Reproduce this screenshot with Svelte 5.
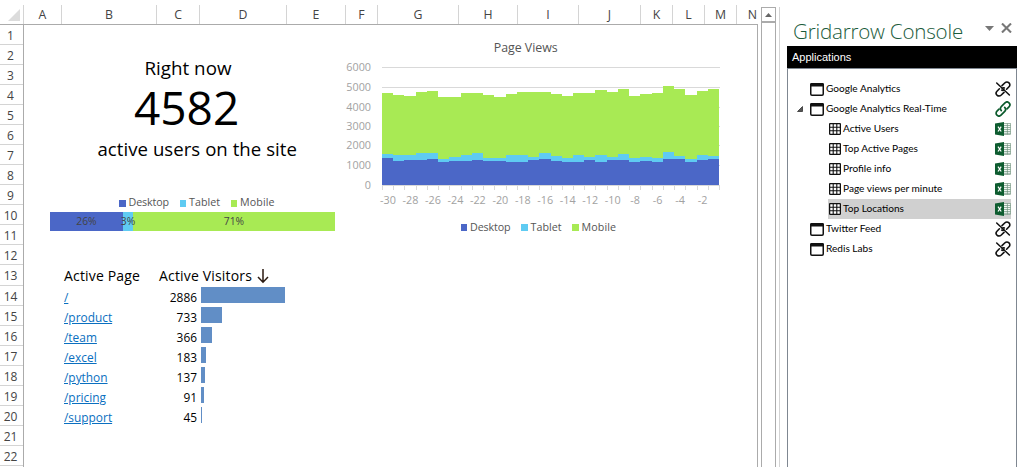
<script>
    const columns = [
        { name: 'A', width: 38 },
        { name: 'B', width: 95 },
        { name: 'C', width: 43 },
        { name: 'D', width: 87 },
        { name: 'E', width: 59 },
        { name: 'F', width: 32 },
        { name: 'G', width: 81 },
        { name: 'H', width: 59 },
        { name: 'I', width: 61 },
        { name: 'J', width: 62 },
        { name: 'K', width: 32 },
        { name: 'L', width: 32 },
        { name: 'M', width: 32 },
        { name: 'N', width: 32 }
    ];
    const rows = Array.from({ length: 22 }, (_, i) => i + 1);

    const pages = [
        { path: '/', visitors: 2886, bar: 84 },
        { path: '/product', visitors: 733, bar: 21 },
        { path: '/team', visitors: 366, bar: 11 },
        { path: '/excel', visitors: 183, bar: 5 },
        { path: '/python', visitors: 137, bar: 4 },
        { path: '/pricing', visitors: 91, bar: 3 },
        { path: '/support', visitors: 45, bar: 1 }
    ];

    // cumulative heights, one entry per minute
    const desktop = [27, 24, 25, 25, 26, 23, 24, 24, 25, 24, 24, 23, 23, 25, 26, 24, 23, 23, 25, 23, 25, 25, 23, 24, 23, 26, 26, 23, 25, 26];
    const tablet = [31, 30, 30, 32, 32, 26, 28, 30, 32, 27, 27, 30, 30, 28, 32, 29, 27, 30, 28, 30, 28, 31, 27, 28, 27, 33, 29, 26, 30, 29];
    const mobile = [92, 90, 89, 93, 94, 88, 88, 92, 92, 90, 88, 91, 93, 93, 93, 91, 89, 92, 92, 95, 93, 96, 89, 91, 92, 99, 96, 90, 94, 96];
    const series = [
        { name: 'mobile', data: mobile },
        { name: 'tablet', data: tablet },
        { name: 'desktop', data: desktop }
    ];

    const left = 382;
    const base = 185;
    const step = 337 / 30;
    const yTicks = [
        [6000, 67], [5000, 87], [4000, 107], [3000, 126], [2000, 145], [1000, 165], [0, 185]
    ];
    const xTicks = Array.from({ length: 15 }, (_, i) => -30 + i * 2);

    function area(data) {
        let d = `M${left} ${base}`;
        data.forEach((h, i) => {
            d += `V${base - h}H${Math.round(left + step * (i + 1))}`;
        });
        return d + `V${base}Z`;
    }

    const apps = [
        { name: 'Google Analytics', linked: false, tables: [] },
        {
            name: 'Google Analytics Real-Time',
            linked: true,
            tables: ['Active Users', 'Top Active Pages', 'Profile info', 'Page views per minute', 'Top Locations']
        },
        { name: 'Twitter Feed', linked: false, tables: [] },
        { name: 'Redis Labs', linked: false, tables: [] }
    ];
    let selected = $state('Top Locations');
</script>

{#snippet windowIcon()}
    <svg class="window" width="14" height="13" viewBox="0 0 14 13">
        <rect x="0.75" y="0.75" width="12.5" height="11.5" rx="1.2" fill="#fff" stroke="#111" stroke-width="1.5" />
        <path d="M0 3.4V1.5Q0 0 1.5 0H12.5Q14 0 14 1.5V3.4Z" fill="#111" />
    </svg>
{/snippet}

{#snippet gridIcon()}
    <svg class="table" width="12" height="12" viewBox="0 0 12 12">
        <rect x="0.6" y="0.6" width="10.8" height="10.8" rx="0.8" fill="#fff" stroke="#111" stroke-width="1.3" />
        <path d="M4.2 0V12M7.8 0V12M0 4.2H12M0 7.8H12" stroke="#111" stroke-width="1.1" />
    </svg>
{/snippet}

{#snippet linkIcon(linked)}
    <svg width="16" height="16" viewBox="0 0 16 16" fill="none" stroke={linked ? '#0b5a2c' : '#111'} stroke-width="1.7" stroke-linecap="round">
        {#if linked}
            <path d="M6.3 9.6C4.9 8.1 5.2 6.6 6.5 5.3L10 1.9C11.2 .7 12.9 .7 14 1.8C15.2 3 15.2 4.6 14 5.8L12 7.8" />
            <path d="M9.7 6.4C11.1 7.9 10.8 9.4 9.5 10.7L6 14.1C4.8 15.3 3.1 15.3 2 14.2C.8 13 .8 11.4 2 10.2L4 8.2" />
        {:else}
            <path d="M7 4.6L9.7 2C10.9 .9 12.8 .8 14 1.9C15.2 3.1 15.1 4.7 14 5.8L11.6 8.2M7.4 7.4C7.8 6.8 8.6 6.6 9.3 7" stroke-width="1.6" />
            <path d="M9 11.4L6.3 14C5.1 15.1 3.2 15.2 2 14.1C.8 12.9 .9 11.3 2 10.2L4.4 7.8M8.7 8.8C8.3 9.4 7.4 9.5 6.7 9.1" stroke-width="1.6" />
            <path d="M1.7 2L14.4 14" stroke-width="1.5" />
        {/if}
    </svg>
{/snippet}

{#snippet excelIcon()}
    <svg width="16" height="14" viewBox="0 0 16 14">
        <rect x="8" y="1.5" width="7.6" height="11" fill="#f4f8f5" stroke="#7c9c88" stroke-width="0.7" />
        <path d="M9 3.5H15.5M9 5.5H15.5M9 7.5H15.5M9 9.5H15.5M9 11.3H15.5M12.4 1.5V12.5" stroke="#6f9480" stroke-width="0.7" />
        <path d="M0 1.5L9 0V14L0 12.5Z" fill="#0d5c2f" />
        <path d="M3 4.7L6.2 9.5M6.2 4.7L3 9.5" stroke="#fff" stroke-width="1.2" />
    </svg>
{/snippet}

<div class="app">
    <main class="sheet">
        <div class="head">
            <div class="corner">
                <svg width="12" height="12" viewBox="0 0 12 12"><path d="M12 0V12H0Z" fill="#dcdcdc" /></svg>
            </div>
            {#each columns as col}
                <div class="col" style="width: {col.width}px">{col.name}</div>
            {/each}
        </div>

        <div class="body">
            <div class="rows">
                {#each rows as n}
                    <div class="row" class:tall={n === 13}>{n}</div>
                {/each}
            </div>

            <div class="cells">
                <section class="summary">
                    <div class="now">Right now</div>
                    <div class="count">4582</div>
                    <div class="users">active users on the site</div>

                    <svg class="share" width="316" height="40" viewBox="24 194 316 40">
                        <g class="desktop"><rect x="119" y="200" width="7" height="7" /><rect x="50" y="212" width="73" height="19" /></g>
                        <g class="tablet"><rect x="180" y="200" width="6" height="7" /><rect x="123" y="212" width="10" height="19" /></g>
                        <g class="mobile"><rect x="231" y="200" width="6" height="7" /><rect x="133" y="212" width="202" height="19" /></g>
                        <g class="legend">
                            <text x="128.5" y="206" textLength="40.5">Desktop</text>
                            <text x="189" y="206" textLength="31">Tablet</text>
                            <text x="240" y="206" textLength="34.5">Mobile</text>
                        </g>
                        <g class="percent">
                            <text x="86.5" y="225">26%</text>
                            <text x="128" y="225">3%</text>
                            <text x="234" y="225">71%</text>
                        </g>
                    </svg>

                    <div class="pages">
                        <div class="line title">
                            <span class="page">Active Page</span>
                            <span>Active Visitors</span>
                            <svg width="12" height="15" viewBox="0 0 12 15"><path d="M6 0V13M1 8L6 13.2L11 8" fill="none" stroke="#2b1a10" stroke-width="1.5" /></svg>
                        </div>
                        {#each pages as page}
                            <div class="line">
                                <span class="page"><a href={page.path}>{page.path}</a></span>
                                <span class="visitors">{page.visitors}</span>
                                <span class="bar" style="width: {page.bar}px"></span>
                            </div>
                        {/each}
                    </div>
                </section>

                <svg class="views" width="400" height="205" viewBox="340 35 400 205">
                    <text class="caption" x="525.7" y="52" textLength="64">Page Views</text>
                    {#each yTicks as [value, y]}
                        <path d="M382 {y + 0.5}H720" stroke="#d9d9d9" />
                        <text class="tick end" x="371" y={y + 4}>{value}</text>
                    {/each}
                    {#each series as s}
                        <path class={s.name} d={area(s.data)} />
                    {/each}
                    {#each { length: 31 } as _, i}
                        <path d="M{Math.round(left + step * i) + 0.5} 186V190" stroke="#d9d9d9" />
                    {/each}
                    {#each xTicks as value, i}
                        <text class="tick" x={left + 6 + step * 2 * i} y="204">{value}</text>
                    {/each}
                    <rect class="desktop" x="461" y="224" width="6" height="7" />
                    <rect class="tablet" x="521" y="224" width="7" height="7" />
                    <rect class="mobile" x="572" y="224" width="7" height="7" />
                    <g class="legend">
                        <text x="470" y="231" textLength="40.5">Desktop</text>
                        <text x="530.5" y="231" textLength="31">Tablet</text>
                        <text x="581.5" y="231" textLength="34.5">Mobile</text>
                    </g>
                </svg>
            </div>
        </div>
    </main>

    <div class="scroll">
        <div class="up">
            <svg width="7" height="4" viewBox="0 0 7 4"><path d="M3.5 0L7 4H0Z" fill="#666" /></svg>
        </div>
        <div class="thumb"></div>
    </div>

    <aside class="console">
        <header>
            <h1>Gridarrow Console</h1>
            <svg class="menu" width="9" height="5" viewBox="0 0 9 5"><path d="M0 0H9L4.5 5Z" fill="#777" /></svg>
            <svg class="close" width="11" height="10" viewBox="0 0 11 10"><path d="M1 0.5L10 9.5M10 0.5L1 9.5" stroke="#777" stroke-width="2.1" /></svg>
        </header>
        <h2>Applications</h2>
        <div class="tree">
            {#each apps as app}
                <div class="node">
                    <span class="toggle">
                        {#if app.tables.length}
                            <svg width="6" height="6" viewBox="0 0 6 6"><path d="M5.5 .5V5.5H.5Z" fill="#555" stroke="#333" stroke-width="0.8" /></svg>
                        {/if}
                    </span>
                    {@render windowIcon()}
                    <span class="label">{app.name}</span>
                    {@render linkIcon(app.linked)}
                </div>
                {#each app.tables as table}
                    <button class="node leaf" class:selected={table === selected} onclick={() => (selected = table)}>
                        {@render gridIcon()}
                        <span class="label">{table}</span>
                        {@render excelIcon()}
                    </button>
                {/each}
            {/each}
        </div>
    </aside>
</div>

<style>
    :global(body) {
        background: #fff;
    }

    .app {
        display: flex;
        width: 1022px;
        height: 467px;
        overflow: hidden;
        font-family: "Open Sans", sans-serif;
        color: #000;
    }

    .app svg {
        display: block;
        flex: none;
    }

    .sheet {
        width: 758px;
        flex: none;
        overflow: hidden;
    }

    .head {
        display: flex;
        height: 25px;
        box-sizing: border-box;
        padding-top: 5px;
        border-bottom: 1px solid #ababab;
    }

    .corner {
        width: 23px;
        flex: none;
        box-sizing: border-box;
        padding: 4px 0 0 8px;
    }

    .col {
        flex: none;
        box-sizing: border-box;
        border-left: 1px solid #d4d4d4;
        font-size: 12.3px;
        line-height: 19px;
        text-align: center;
        color: #444;
    }

    .body {
        display: flex;
        height: 442px;
    }

    .rows {
        width: 24px;
        flex: none;
        box-sizing: border-box;
        border-right: 1px solid #ababab;
    }

    .row {
        height: 20px;
        box-sizing: border-box;
        border-bottom: 1px solid #d4d4d4;
        padding-right: 2px;
        font-size: 12px;
        line-height: 21px;
        text-align: center;
        color: #444;
    }

    .row.tall {
        height: 21px;
    }

    .cells {
        display: flex;
        align-items: flex-start;
        flex: 1;
        border-right: 1px solid #ababab;
    }

    .summary {
        width: 316px;
        flex: none;
        padding-top: 28px;
        white-space: nowrap;
    }

    .now {
        padding-left: 120.5px;
        font-size: 18.8px;
        line-height: 30px;
    }

    .count {
        padding-left: 110px;
        font-size: 46px;
        line-height: 48px;
    }

    .users {
        padding-left: 73.5px;
        font-size: 18.6px;
        line-height: 36px;
        letter-spacing: 0.04px;
    }

    .share {
        margin-top: 27px;
    }

    .desktop {
        fill: #4b67c7;
    }

    .tablet {
        fill: #5fcbf2;
    }

    .mobile {
        fill: #a8ea54;
    }

    .legend {
        font-size: 10.7px;
        fill: #555;
    }

    .percent {
        font-size: 10.3px;
        fill: #444;
        text-anchor: middle;
    }

    .pages {
        margin-top: 31px;
        padding-left: 40px;
    }

    .line {
        display: flex;
        height: 20px;
        font-size: 11.9px;
        line-height: 22px;
    }

    .line.title {
        height: 21px;
        font-size: 14px;
        line-height: 21px;
        letter-spacing: 0.17px;
    }

    .title svg {
        margin: 4px 0 0 5px;
    }

    .page {
        width: 95px;
        flex: none;
    }

    .page a {
        color: #0a6fc0;
        text-underline-offset: 1px;
    }

    .visitors {
        width: 38px;
        margin-right: 4px;
        text-align: right;
    }

    .bar {
        height: 16px;
        margin-top: 1px;
        background: #618ec6;
    }

    .views {
        margin-top: 10px;
    }

    .caption {
        font-size: 12.4px;
        fill: #555;
        text-anchor: middle;
    }

    .tick {
        font-size: 10.8px;
        fill: #a2a2a2;
        text-anchor: middle;
    }

    .tick.end {
        text-anchor: end;
    }

    .scroll {
        width: 15px;
        flex: none;
        margin-left: 3px;
        padding-top: 7px;
    }

    .up {
        display: flex;
        align-items: center;
        justify-content: center;
        height: 15px;
        box-sizing: border-box;
        border: 1px solid #ababab;
    }

    .thumb {
        height: 460px;
        box-sizing: border-box;
        border: 1px solid #ababab;
    }

    .console {
        flex: 1;
        margin: 7px 0 0 3px;
        padding: 0 5px 0 7px;
        border-left: 1px solid #d4d4d4;
    }

    header {
        display: flex;
        height: 39px;
        padding-left: 6px;
    }

    h1 {
        margin: 0;
        width: 192px;
        font-size: 20.6px;
        font-weight: 300;
        line-height: 48px;
        letter-spacing: -0.22px;
        color: #1c5c3c;
        white-space: nowrap;
    }

    .menu {
        margin-top: 19px;
    }

    .close {
        margin: 16px 0 0 7px;
    }

    h2 {
        margin: 0;
        height: 22px;
        padding-left: 5px;
        background: #000;
        color: #fff;
        font: 11px/22px "Liberation Sans", sans-serif;
    }

    .tree {
        height: 400px;
        box-sizing: border-box;
        padding: 10px 5px 0 9px;
        border: 1px solid #7f8791;
    }

    .node {
        display: flex;
        align-items: center;
        height: 20px;
        font: 10.1px/18px Lato, sans-serif;
        color: #000;
    }

    .toggle {
        width: 13px;
    }

    .label {
        flex: 1;
        margin: 0 0 2px 2px;
        text-align: left;
        white-space: nowrap;
    }

    .leaf {
        width: 183px;
        margin-left: 31px;
        padding: 0 0 0 1px;
        border: none;
        background: none;
    }

    .leaf.selected {
        background: #d0d0d0;
    }
</style>
